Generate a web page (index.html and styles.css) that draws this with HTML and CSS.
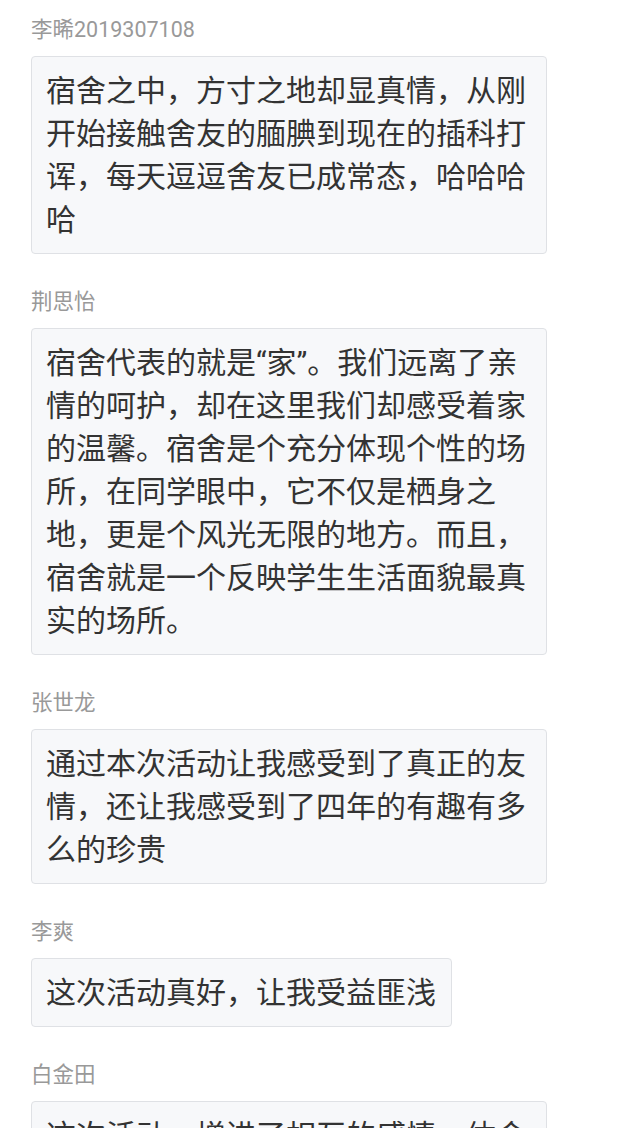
FILE: index.html
```html
<!DOCTYPE html>
<html>
  <head>
    <meta charset="UTF-8">
    <title>留言</title>
    <link rel="stylesheet" href="styles.css">
  </head>
  <body>
    <div class="comments">
      <div class="comment">
        <div class="name">李晞2019307108</div>
        <div class="bubble">宿舍之中，方寸之地却显真情，从刚开始接触舍友的腼腆到现在的插科打诨，每天逗逗舍友已成常态，哈哈哈哈</div>
      </div>
      <div class="comment">
        <div class="name">荆思怡</div>
        <div class="bubble">宿舍代表的就是“家”。我们远离了亲情的呵护，却在这里我们却感受着家的温馨。宿舍是个充分体现个性的场所，在同学眼中，它不仅是栖身之地，更是个风光无限的地方。而且，宿舍就是一个反映学生生活面貌最真实的场所。</div>
      </div>
      <div class="comment">
        <div class="name">张世龙</div>
        <div class="bubble">通过本次活动让我感受到了真正的友情，还让我感受到了四年的有趣有多么的珍贵</div>
      </div>
      <div class="comment">
        <div class="name">李爽</div>
        <div class="bubble">这次活动真好，让我受益匪浅</div>
      </div>
      <div class="comment">
        <div class="name">白金田</div>
        <div class="bubble">这次活动，增进了相互的感情，体会到了宿舍大家庭的温暖。</div>
      </div>
    </div>
  </body>
</html>
```

FILE: styles.css
```css
body {
  margin: 0;
  padding: 16px 0 0 31px;
  font-family: Roboto, "Noto Sans CJK SC", sans-serif;
  background-color: #fff;
  color: #333;
}

.comments {
  width: 516px;
}

.comment {
  display: flex;
  flex-direction: column;
  align-items: flex-start;
  margin-bottom: 34px;
}

.name {
  font-size: 21.5px;
  line-height: 28px;
  color: #999;
  margin-bottom: 12px;
}

.bubble {
  box-sizing: border-box;
  max-width: 516px;
  padding: 12px 15px 12px 14px;
  font-size: 30px;
  line-height: 43px;
  background-color: #f7f8fa;
  border: 1px solid #dfe1e5;
  border-radius: 4px;
}
```
